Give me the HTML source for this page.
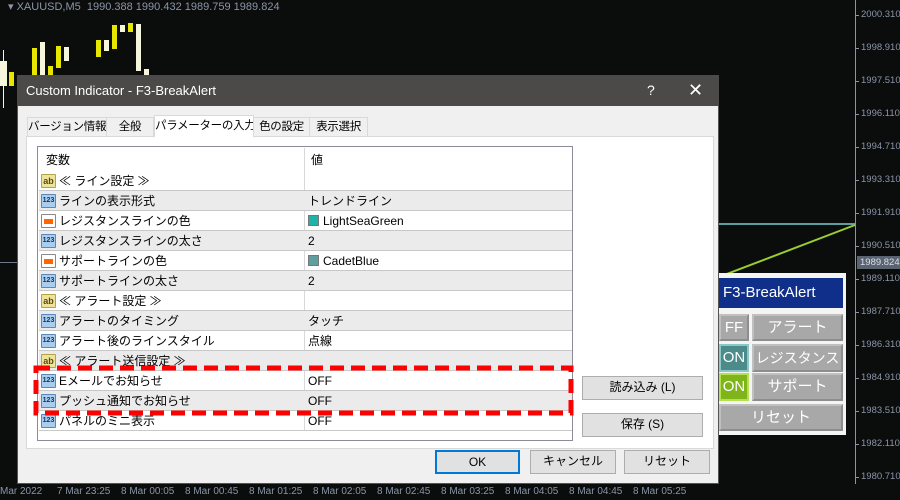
<!DOCTYPE html>
<html><head><meta charset="utf-8"><style>
*{margin:0;padding:0;box-sizing:border-box}
body{width:900px;height:500px;background:#0b0c0c;position:relative;overflow:hidden;font-family:"Liberation Sans","Noto Sans CJK JP",sans-serif;font-size:12px;line-height:14px;color:#000;white-space:nowrap}
.abs{position:absolute}
.ax{color:#8a96a8;font-size:9.5px;position:absolute;left:861px;line-height:12px}
.tk{position:absolute;left:855px;width:4px;height:1px;background:#8a96a8}
.bt{color:#8a96a8;font-size:10px;position:absolute;top:485px}
.c{position:absolute}
.row{position:absolute;left:39px;width:533px;height:20px;border-bottom:1px solid #c8c8c8}
.row .n{position:absolute;left:20px;top:3px}
.row .v{position:absolute;left:269px;top:3px}
.ic{position:absolute;left:2px;top:3px;width:15px;height:14px;border:1px solid #5a86b8;background:#a9cdee;font-size:7px;color:#12335e;text-align:center;line-height:12px;font-weight:bold;border-radius:1px}
.ab{background:#efe39a;border-color:#b4a24a;color:#5a4a10;font-size:9px}
.col{background:#fff;border-color:#888}
.col i{position:absolute;left:2px;top:4px;width:9px;height:5px;background:#f60}
.btn{position:absolute;background:#e1e1e1;border:1px solid #adadad;text-align:center;line-height:21px}
.tab{position:absolute;top:117px;height:20px;background:#f0f0f0;border:1px solid #d9d9d9;text-align:center;line-height:19px;font-size:11.5px;letter-spacing:-0.3px}
.pb{position:absolute;background:#a8a8a8;color:#fff;font-size:15px;text-align:center;border:2px solid #8d8d8d;border-left-color:#c0c0c0;border-top-color:#c0c0c0;overflow:hidden}
</style></head><body>
<div class="abs" style="left:8px;top:0;color:#8a96a8;font-size:11px">▾ XAUUSD,M5 &nbsp;1990.388 1990.432 1989.759 1989.824</div>
<div class="abs" style="left:0;top:262px;width:17px;height:1px;background:#6a7a88"></div>
<div class="c" style="left:3px;top:50px;width:1px;height:58px;background:#f6f6dc"></div>
<div class="c" style="left:0;top:61px;width:7px;height:25px;background:#f6f6dc"></div>
<div class="c" style="left:9px;top:72px;width:5px;height:14px;background:#e6e600"></div>
<div class="c" style="left:32px;top:48px;width:5px;height:27px;background:#e6e600"></div>
<div class="c" style="left:40px;top:42px;width:5px;height:33px;background:#f6f6dc"></div>
<div class="c" style="left:48px;top:66px;width:5px;height:9px;background:#e6e600"></div>
<div class="c" style="left:56px;top:46px;width:5px;height:22px;background:#e6e600"></div>
<div class="c" style="left:64px;top:47px;width:5px;height:14px;background:#f6f6dc"></div>
<div class="c" style="left:96px;top:40px;width:5px;height:17px;background:#e6e600"></div>
<div class="c" style="left:104px;top:40px;width:5px;height:11px;background:#f6f6dc"></div>
<div class="c" style="left:112px;top:25px;width:5px;height:24px;background:#e6e600"></div>
<div class="c" style="left:120px;top:25px;width:5px;height:7px;background:#f6f6dc"></div>
<div class="c" style="left:128px;top:23px;width:5px;height:9px;background:#e6e600"></div>
<div class="c" style="left:136px;top:24px;width:5px;height:47px;background:#f6f6dc"></div>
<div class="c" style="left:144px;top:69px;width:5px;height:6px;background:#f6f6dc"></div>
<div class="abs" style="left:719px;top:223px;width:136px;height:2px;background:#5f9ea0"></div>
<svg class="abs" style="left:719px;top:222px" width="140" height="60"><line x1="0" y1="55" x2="136" y2="3" stroke="#9acd32" stroke-width="2"/></svg>
<div class="abs" style="left:855px;top:0;width:1px;height:484px;background:#8a96a8"></div>
<div class="tk" style="top:15px"></div><div class="ax" style="top:9px">2000.310</div>
<div class="tk" style="top:48px"></div><div class="ax" style="top:42px">1998.910</div>
<div class="tk" style="top:81px"></div><div class="ax" style="top:75px">1997.510</div>
<div class="tk" style="top:114px"></div><div class="ax" style="top:108px">1996.110</div>
<div class="tk" style="top:147px"></div><div class="ax" style="top:141px">1994.710</div>
<div class="tk" style="top:180px"></div><div class="ax" style="top:174px">1993.310</div>
<div class="tk" style="top:213px"></div><div class="ax" style="top:207px">1991.910</div>
<div class="tk" style="top:246px"></div><div class="ax" style="top:240px">1990.510</div>
<div class="abs" style="left:857px;top:256px;width:43px;height:13px;background:#5a6470;color:#dde;font-size:9.5px;line-height:13px;padding-left:3px">1989.824</div>
<div class="tk" style="top:279px"></div><div class="ax" style="top:273px">1989.110</div>
<div class="tk" style="top:312px"></div><div class="ax" style="top:306px">1987.710</div>
<div class="tk" style="top:345px"></div><div class="ax" style="top:339px">1986.310</div>
<div class="tk" style="top:378px"></div><div class="ax" style="top:372px">1984.910</div>
<div class="tk" style="top:411px"></div><div class="ax" style="top:405px">1983.510</div>
<div class="tk" style="top:444px"></div><div class="ax" style="top:438px">1982.110</div>
<div class="tk" style="top:477px"></div><div class="ax" style="top:471px">1980.710</div>
<div class="bt" style="left:0">Mar 2022</div><div class="bt" style="left:57px">7 Mar 23:25</div><div class="bt" style="left:121px">8 Mar 00:05</div><div class="bt" style="left:185px">8 Mar 00:45</div><div class="bt" style="left:249px">8 Mar 01:25</div><div class="bt" style="left:313px">8 Mar 02:05</div><div class="bt" style="left:377px">8 Mar 02:45</div><div class="bt" style="left:441px">8 Mar 03:25</div><div class="bt" style="left:505px">8 Mar 04:05</div><div class="bt" style="left:569px">8 Mar 04:45</div><div class="bt" style="left:633px">8 Mar 05:25</div>
<!-- panel -->
<div class="abs" style="left:719px;top:273px;width:127px;height:162px;background:#f4f4f4"></div>
<div class="abs" style="left:719px;top:278px;width:124px;height:30px;background:#0f2f8a;color:#fff;font-size:15px;line-height:30px;padding-left:4px">F3-BreakAlert</div>
<div class="pb" style="left:719px;top:314px;width:30px;height:27px;line-height:23px">FF</div>
<div class="pb" style="left:752px;top:314px;width:91px;height:27px;line-height:23px">アラート</div>
<div class="pb" style="left:719px;top:344px;width:30px;height:28px;line-height:24px;background:#4d8a8a;border-color:#8ac8c8">ON</div>
<div class="pb" style="left:752px;top:344px;width:91px;height:28px;line-height:24px;font-size:14px">レジスタンス</div>
<div class="pb" style="left:719px;top:373px;width:30px;height:28px;line-height:24px;background:#7fb51a;border-color:#b5e050">ON</div>
<div class="pb" style="left:752px;top:373px;width:91px;height:28px;line-height:24px">サポート</div>
<div class="pb" style="left:719px;top:404px;width:124px;height:27px;line-height:23px">リセット</div>
<!-- dialog -->
<div class="abs" style="left:17px;top:75px;width:702px;height:409px;background:#f0f0f0;border:1px solid #555"></div>
<div class="abs" style="left:17px;top:75px;width:702px;height:31px;background:#4b4a48;color:#fff;font-size:13px;line-height:31px;padding-left:9px">Custom Indicator - F3-BreakAlert</div>
<div class="abs" style="left:647px;top:82px;color:#fff;font-size:14px;line-height:16px">?</div>
<div class="abs" style="left:688px;top:80px;color:#fff;font-size:18px;line-height:20px">✕</div>
<div class="abs" style="left:26px;top:136px;width:688px;height:313px;background:#fff;border:1px solid #d9d9d9"></div>
<div class="tab" style="left:27px;width:80px">バージョン情報</div>
<div class="tab" style="left:106px;width:48px">全般</div>
<div class="tab" style="left:154px;top:115px;width:100px;height:22px;background:#fff;border-bottom:none;line-height:20px">パラメーターの入力</div>
<div class="tab" style="left:253px;width:57px">色の設定</div>
<div class="tab" style="left:309px;width:59px">表示選択</div>
<div class="abs" style="left:37px;top:146px;width:536px;height:295px;background:#fff;border:1px solid #8c8c98"></div>
<div class="abs" style="left:304px;top:148px;width:1px;height:283px;background:#d8d8d8"></div>
<div class="abs" style="left:46px;top:153px">変数</div><div class="abs" style="left:311px;top:153px">値</div>
<div class="row" style="top:171px"><div class="ic ab">ab</div><div class="n">≪ ライン設定 ≫</div></div>
<div class="row" style="top:191px;background:#ebebeb"><div class="ic">123</div><div class="n">ラインの表示形式</div><div class="v">トレンドライン</div></div>
<div class="row" style="top:211px"><div class="ic col"><i></i></div><div class="n">レジスタンスラインの色</div><div class="v"><span style="display:inline-block;width:11px;height:11px;background:#20b2aa;border:1px solid #777;vertical-align:-1px;margin-right:4px"></span>LightSeaGreen</div></div>
<div class="row" style="top:231px;background:#ebebeb"><div class="ic">123</div><div class="n">レジスタンスラインの太さ</div><div class="v">2</div></div>
<div class="row" style="top:251px"><div class="ic col"><i></i></div><div class="n">サポートラインの色</div><div class="v"><span style="display:inline-block;width:11px;height:11px;background:#5f9ea0;border:1px solid #777;vertical-align:-1px;margin-right:4px"></span>CadetBlue</div></div>
<div class="row" style="top:271px;background:#ebebeb"><div class="ic">123</div><div class="n">サポートラインの太さ</div><div class="v">2</div></div>
<div class="row" style="top:291px"><div class="ic ab">ab</div><div class="n">≪ アラート設定 ≫</div></div>
<div class="row" style="top:311px;background:#ebebeb"><div class="ic">123</div><div class="n">アラートのタイミング</div><div class="v">タッチ</div></div>
<div class="row" style="top:331px"><div class="ic">123</div><div class="n">アラート後のラインスタイル</div><div class="v">点線</div></div>
<div class="row" style="top:351px;background:#ebebeb"><div class="ic ab">ab</div><div class="n">≪ アラート送信設定 ≫</div></div>
<div class="row" style="top:371px"><div class="ic">123</div><div class="n">Eメールでお知らせ</div><div class="v">OFF</div></div>
<div class="row" style="top:391px;background:#ebebeb"><div class="ic">123</div><div class="n">プッシュ通知でお知らせ</div><div class="v">OFF</div></div>
<div class="row" style="top:411px"><div class="ic">123</div><div class="n">パネルのミニ表示</div><div class="v">OFF</div></div>
<svg class="abs" style="left:33px;top:365px" width="542" height="52"><rect x="3" y="3" width="535" height="45" fill="none" stroke="#f00" stroke-width="5" stroke-dasharray="14,7"/></svg>
<div class="btn" style="left:582px;top:376px;width:121px;height:24px">読み込み (L)</div>
<div class="btn" style="left:582px;top:413px;width:121px;height:24px">保存 (S)</div>
<div class="btn" style="left:435px;top:450px;width:85px;height:24px;border:2px solid #0078d7;line-height:20px">OK</div>
<div class="btn" style="left:530px;top:450px;width:86px;height:24px">キャンセル</div>
<div class="btn" style="left:624px;top:450px;width:86px;height:24px">リセット</div>
</body></html>
